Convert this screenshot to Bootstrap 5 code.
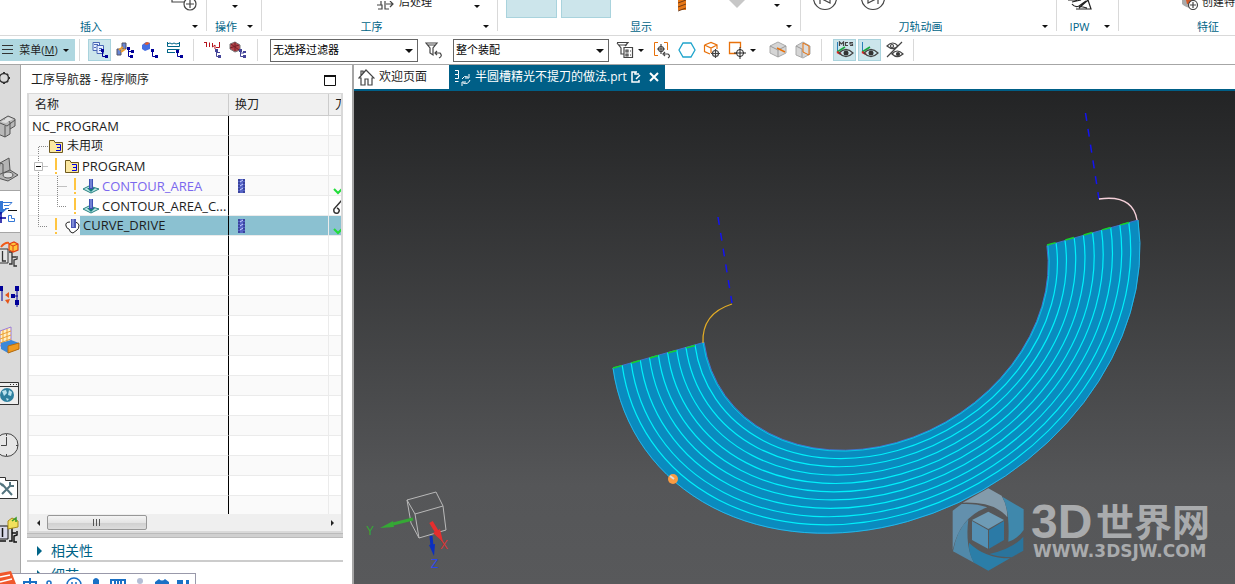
<!DOCTYPE html>
<html lang="zh-CN">
<head>
<meta charset="utf-8">
<meta name="viewport" content="width=device-width, initial-scale=1">
<title>工序导航器</title>
<link href="https://cdn.jsdelivr.net/npm/bootstrap@5.3.0/dist/css/bootstrap.min.css" rel="stylesheet">
<style>
:root { --teal:#006487; --tab:#005f87; --sel:#cce5eb; --selline:#a9d3dd; --rule:#d9d9d9; --edge:#a6a6a6; }
body { font-family:"Open Sans","Noto Sans CJK SC",sans-serif; font-size:12px; line-height:16px; color:#1e1e1e; background:#fff; }
button { border:0; background:none; padding:0; color:inherit; font:inherit; display:flex; align-items:center; justify-content:center; }
svg { display:block; flex:none; fill:none; }
.k { stroke:#444; stroke-width:1.2; }
.caret { width:10px; height:12px; flex:none; }
.caret::before { content:""; border:3px solid transparent; border-top-color:#111; border-bottom:0; }

.ribbon { display:grid; grid-template-columns:207px 55px 236px 303px 256px 62px 1fr; height:36px; border-bottom:1px solid var(--rule); overflow:hidden; }
.rgroup { position:relative; display:flex; flex-direction:column; justify-content:space-between; min-width:0; overflow:hidden; }
.rgroup:not(:last-child)::after { content:""; position:absolute; right:0; top:0; height:31px; border-right:1px solid var(--rule); }
.rtools { height:18px; display:flex; align-items:flex-start; }
.rlabel { display:flex; align-items:center; height:17px; padding-right:7px; color:var(--teal); font-size:11px; }
.rlabel > span { flex:1; text-align:center; white-space:nowrap; }
.rbig { width:51px; height:18px; background:var(--sel); border:1px solid var(--selline); border-top:0; }
.clipped { height:10px; align-items:flex-end; font-size:11px; white-space:nowrap; }

.cmdbar { height:29px; border-bottom:1px solid var(--edge); font-size:11px; }
.menubtn { background:#afd7e0; width:75px; height:22px; gap:5px; }
.vsep { width:1px; height:22px; background:var(--rule); flex:none; }
.vsep.mid { margin:0 7px; }
.tool { width:23px; height:22px; flex:none; }
.tool.on { background:var(--sel); border:1px solid var(--selline); }
.tools { display:flex; gap:2px; align-items:center; }
.pick { position:relative; height:23px; }
.pick select { appearance:none; width:100%; height:100%; border:1px solid #666; border-radius:0; background:#fff; padding:0 2px; font-size:11px; line-height:16px; color:#000; }
.pick .caret { position:absolute; right:3px; top:6px; pointer-events:none; display:flex; align-items:center; }
.pick .caret::before { border-width:4px 4px 0; }
.w-filter { width:148px; } .w-scope { width:156px; }

.rail { width:21px; background:#dadada; border-right:1px solid var(--edge); overflow:hidden; flex:none; }
.rail button { width:20px; height:43px; justify-content:flex-start; flex:none; }
.rail .short { height:25px; margin-bottom:14px; }
.rail .far { margin-top:9px; }
.rail .open { width:21px; background:#fff; border:solid var(--edge); border-width:1px 0; }
.navpane { width:333px; flex:none; padding:0 9px 0 6px; border-right:2px solid var(--edge); }
.panehead { height:28px; padding:2px 7px 0 4px; }
.treebox { border:2px solid var(--rule); border-top-width:1px; overflow:hidden; min-height:0; }
.treewrap { overflow:hidden; min-height:0; }
.tree { table-layout:fixed; width:100%; border-collapse:separate; border-spacing:0; }
.tree th { height:22px; background:#f0f0f0; border-right:1px solid #ccc; border-bottom:1px solid #ccc; font-weight:400; padding:0 0 0 6px; overflow:hidden; white-space:nowrap; }
.tree td { height:20px; padding:0; border-bottom:1px solid #ebebeb; border-right:1px solid #ebebeb; overflow:hidden; white-space:nowrap; }
.tree td:first-child { border-right:1px solid #000; }
.tree th:last-child,.tree td:last-child { border-right:0; }
.tree tbody tr:nth-child(even) td { background:#fafafa; }
.node { display:flex; align-items:center; height:19px; }
.node span { font-size:13px; padding-left:3px; }
.node .zh { font-size:12px; padding-left:4px; }
.node .later { color:#7b68ee; }
.tree tbody tr.current td:not(:first-child),.current .node span { background:#8bc1d1; }
.current .node span { flex:1; line-height:19px; }
.hbar { height:17px; background:#efefef; padding:0 4px; }
.thumb { width:100px; height:15px; border:1px solid #979797; border-radius:2px; background:linear-gradient(#f4f4f4,#e4e4e4 50%,#cfcfcf 51%,#dcdcdc); }
.splitter { height:5px; background:#d0d0d0; border:solid #bbb; border-width:1px 0; flex:none; }
.fold { height:24px; font-size:14px; color:var(--teal); border-bottom:2px solid #ccc; justify-content:flex-start; padding:3px 0 0 10px; gap:8px; width:100%; flex:none; }
.fold:last-child { height:22px; border:0; }

.tabs { height:26px; border-bottom:2px solid var(--tab); flex:none; }
.doctab { height:24px; text-decoration:none; color:#1e1e1e; white-space:nowrap; display:flex; align-items:center; gap:4px; padding:0 6px 0 4px; }
.doctab.home { width:95px; }
.doctab.cur { background:var(--tab); color:#fff; }
.scene { background:linear-gradient(#232425,#555658 80%,#58595b); min-height:0; }
.scene svg { width:100%; height:100%; }
.ime { position:absolute; left:0; bottom:0; width:196px; height:11px; background:#fff; border:solid #99a; border-width:1px 1px 0 0; overflow:hidden; }
</style>
</head>
<body class="vh-100 d-flex flex-column overflow-hidden position-relative">

<header class="ribbon flex-shrink-0">
  <div class="rgroup">
    <div class="rtools justify-content-end pe-2"><svg width="28" height="12" class="k"><path d="M1 0V2H13"/><circle cx="19" cy="4" r="6"/><path d="M19 0V8M15 4H23"/></svg></div>
    <div class="rlabel"><span class="pe-2">插入</span><button class="caret" aria-label="插入"></button></div>
  </div>
  <div class="rgroup">
    <div class="rtools justify-content-center"><button class="caret" aria-label="更多操作"></button></div>
    <div class="rlabel"><span>操作</span><button class="caret" aria-label="操作"></button></div>
  </div>
  <div class="rgroup">
    <div class="rtools justify-content-end pe-3"><button class="clipped gap-1 me-4"><svg width="18" height="9" class="k"><path d="M0 4H5V8H1M4 0V4M8 0V8H12M9 3H16M13 0L16 3L13 6"/></svg>后处理</button><button class="caret ms-3" aria-label="更多后处理"></button></div>
    <div class="rlabel"><span>工序</span><button class="caret" aria-label="工序"></button></div>
  </div>
  <div class="rgroup">
    <div class="rtools ps-2"><button class="rbig me-1" aria-label="显示刀轨"></button><button class="rbig" aria-label="显示刀具"></button>
      <svg width="190" height="14"><path d="M67 0H75V10H67Z" fill="#e67817"/><path d="M67 3L75 0M67 7L75 4M67 11L75 8" stroke="#733b15"/><path d="M118 0H134L126 8Z" fill="#c7c7c7"/><path d="M163 4H169L166 7Z" fill="#111"/></svg></div>
    <div class="rlabel"><span>显示</span><button class="caret" aria-label="显示"></button></div>
  </div>
  <div class="rgroup">
    <div class="rtools ps-2"><svg width="90" height="14" class="k"><circle cx="16" cy="-2" r="11.500"/><path d="M11 -4V4M21 -6V3L13 -1"/><circle cx="64" cy="-2" r="11.500"/><path d="M59 -6V3L67 -1M69 -4V4"/></svg></div>
    <div class="rlabel"><span>刀轨动画</span><button class="caret" aria-label="刀轨动画"></button></div>
  </div>
  <div class="rgroup">
    <div class="rtools justify-content-center pe-3"><svg width="30" height="12" stroke="#222" stroke-width="1.200"><path d="M3 0H12M7 4Q10 8 14 6L21 1M14 8L23 0L26 9H11M14 6L22 8M7 2L16 0"/></svg></div>
    <div class="rlabel"><span>IPW</span><button class="caret" aria-label="IPW"></button></div>
  </div>
  <div class="rgroup">
    <div class="rtools justify-content-end"><button class="clipped"><svg width="20" height="10"><path d="M0 0H10V8Q4 8 0 4Z" fill="#aaa"/><path d="M4 0H10V4H5Z" fill="#d55a28"/><circle cx="11" cy="5" r="4.500" fill="#fff" class="k"/><path class="k" d="M11 2V8M8 5H14"/></svg>创建特</button></div>
    <div class="rlabel justify-content-end pe-3">特征</div>
  </div>
</header>

<nav class="cmdbar d-flex align-items-center flex-shrink-0" aria-label="选择工具">
  <button class="menubtn"><svg width="12" height="12" stroke="#333"><path d="M0 1.500H11M0 5.500H11M0 9.500H11"/></svg><span>菜单(<u>M</u>)</span><i class="caret d-flex align-items-center"></i></button>
  <i class="vsep ms-1 me-2"></i>
  <div class="tools">
    <button class="tool on" aria-label="程序顺序视图"><svg width="18" height="18"><path d="M2 1.500H8.500V9.500H2Z" fill="#e8efff" stroke="#4a67b5"/><path d="M6 4.500H12.500V12.500H6Z" fill="#e8efff" stroke="#4a67b5"/><path d="M3 3.500H7M3 6.500H5M8 7.500H11M8 9.500H10" stroke="#4a67b5"/><path d="M11.500 9V15.500H16" stroke="#009"/><path d="M10 8h3v3h-3zM14 14h3v3h-3z" fill="#009"/></svg></button>
    <button class="tool" aria-label="机床视图"><svg width="18" height="18"><path d="M1 8H5V14H1ZM6 2H10V8H6Z" fill="#6786d4" stroke="#556"/><path d="M3 9L7 6M5 11L9 8" stroke="#ec9d30" stroke-width="2"/><path d="M12.500 6V15.500H16M12 10.500H16" stroke="#009"/><path d="M11 6h3v3h-3zM15 9h3v3h-3zM14 14h3v3h-3z" fill="#009"/></svg></button>
    <button class="tool" aria-label="几何视图"><svg width="18" height="18"><path d="M1 4L5 1L9 2V8L4 10L1 8Z" fill="#466fe0"/><path d="M3 3L6 1L9 2L6 4Z" fill="#e55c28"/><path d="M11.500 9V15.500H16" stroke="#009"/><path d="M10 8h3v3h-3zM14 14h3v3h-3z" fill="#009"/></svg></button>
    <button class="tool" aria-label="加工方法视图"><svg width="18" height="18"><path d="M1.500 1V5.500H13.500V1M1.500 12V8.500H13.500M1 3L4 2L6 3L8 2L10 3L14 2M1 11.500H9" stroke="#006487"/><path d="M11.500 10V15.500H16" stroke="#009"/><path d="M10 9h3v3h-3zM14 14h3v3h-3z" fill="#009"/></svg></button>
  </div>
  <i class="vsep mid"></i>
  <div class="tools">
    <button class="tool" aria-label="刀轨"><svg width="18" height="18"><path d="M0 1.500H3M2.500 1V6M5.500 6V1.500M8.500 2V6L11 4V8M12 6.500H15.500V1" stroke="#b5121b"/><path d="M12.500 8V15.500H16M12 11.500H16" stroke="#449"/><path d="M11 8h3v3h-3zM14 14h3v3h-3z" fill="#449"/></svg></button>
    <button class="tool" aria-label="工件"><svg width="18" height="18"><path d="M1 3L6 1L11 4V9L6 11L1 8Z" fill="#b34249" stroke="#777"/><path d="M2 3L10 9M6 1V10M1 7L10 4" stroke="#742026"/><path d="M11.500 8V15.500H16M11 12H15" stroke="#449"/><path d="M10 8h3v3h-3zM14 14h3v3h-3zM14 10h3v2h-3z" fill="#449"/></svg></button>
  </div>
  <i class="vsep ms-2 me-1"></i>
  <div class="pick w-filter ms-2 me-1"><select aria-label="选择过滤器"><option>无选择过滤器</option></select><i class="caret"></i></div>
  <button class="tool me-2" aria-label="重置过滤器"><svg width="18" height="18" class="k"><path d="M1 2H12L8 7V14L5 12V7ZM2 4H11M10 12H15Q18 15 14 17M12 10L10 12L12 14"/></svg></button>
  <div class="pick w-scope"><select aria-label="选择范围"><option>整个装配</option></select><i class="caret"></i></div>
  <button class="tool ms-1" aria-label="选择优先级"><svg width="18" height="18" class="k"><path d="M1 1.500H12L9 5M1 2L5 7V13H8M3 4H11M8 6.500H16.500V16.500H8ZM10 9H12V11H10ZM10 13H12V15H10ZM14 10H15M14 14H15"/></svg></button>
  <button class="caret me-1" aria-label="更多优先级"></button>
  <div class="tools">
    <button class="tool" aria-label="捕捉"><svg width="18" height="18"><path d="M5 1.500H1.500V14.500H5M11 1.500H14.500V9" stroke="#e8710a"/><circle cx="8" cy="8" r="2.500" class="k"/><path class="k" d="M8 3V13M4 8H12M11 13H15Q18 15 15 17M12 11L10 13L12 15"/></svg></button>
    <button class="tool" aria-label="多边形"><svg width="18" height="18"><path d="M5 2H13L17 9L13 16H5L1 9Z" stroke="#1fa4cc" stroke-width="1.300"/></svg></button>
    <button class="tool" aria-label="体捕捉"><svg width="18" height="18"><path d="M1.500 4L8 1.500L14 4V8M1.500 4V10.500L7 13M1.500 4L8 7L14 4M8 7V12" stroke="#e8710a" stroke-width="1.200"/><circle cx="12.500" cy="12.500" r="3" class="k"/><path class="k" d="M12.500 8V17M8 12.500H17"/></svg></button>
    <button class="tool" aria-label="面捕捉"><svg width="18" height="18"><path d="M8 12.500H1.500V1.500H12.500V7" stroke="#e8710a" stroke-width="1.300"/><circle cx="12" cy="12" r="3.500" stroke="#222"/><path stroke="#222" d="M12 6V18M6 12H18"/></svg></button>
  </div>
  <button class="caret me-2" aria-label="更多捕捉"></button>
  <div class="tools">
    <button class="tool" aria-label="剖切"><svg width="18" height="18"><path d="M1 5L9 1L17 5V12L9 16L1 12Z" fill="#d5d5d5" stroke="#aaa"/><path d="M1 5L9 9L17 5M9 9V16" stroke="#999"/><path d="M8 7L16 11" stroke="#e8710a" stroke-width="1.500"/></svg></button>
    <button class="tool" aria-label="着色"><svg width="18" height="18"><path d="M2 5L9 1L16 5V13L9 17L2 14Z" fill="#d5d5d5" stroke="#aaa"/><path d="M2 5L8 8V16" stroke="#999"/><path d="M9 2L15 5V14L9 11Z" stroke="#e8710a" fill="#ddd"/></svg></button>
  </div>
  <i class="vsep mid"></i>
  <div class="tools ps-1">
    <button class="tool on" aria-label="显示 MCS"><svg width="18" height="18"><path d="M1.500 1V12" stroke="#2a7fb8"/><path d="M1 11L9 6" stroke="#15a83c" stroke-width="1.500"/><path d="M1 11L5 13" stroke="#e22" stroke-width="2"/><path class="k" d="M3.500 5V1L5.500 3L7.500 1V5M12 1.500H9.500V4.500H12M17 1.500H14V3H16.500V4.500H14"/><path d="M3 12Q10 5 17 12Q10 19 3 12Z" class="k"/><circle cx="10" cy="12" r="2.500" fill="#333"/></svg></button>
    <button class="tool on" aria-label="显示坐标系"><svg width="18" height="18"><path d="M1.500 1V12" stroke="#2a7fb8"/><path d="M1 11L9 6" stroke="#15a83c" stroke-width="1.500"/><path d="M1 11L5 13" stroke="#e22" stroke-width="2"/><path d="M3 12Q10 5 17 12Q10 19 3 12Z" class="k"/><circle cx="10" cy="12" r="2.500" fill="#333"/></svg></button>
    <button class="tool" aria-label="显示和隐藏"><svg width="18" height="18" class="k"><path d="M1 16L16 1M1 5Q7 -1 12 5Q7 10 1 5ZM6 13Q11 7 17 13Q11 18 6 13Z"/><circle cx="6" cy="5" r="1.500"/><circle cx="12" cy="13" r="1.500" fill="#333"/></svg></button>
  </div>
  <i class="vsep mid"></i>
</nav>

<div class="d-flex flex-grow-1 overflow-hidden">
  <aside class="rail d-flex flex-column" aria-label="资源条">
    <button class="short" aria-label="设置"><svg width="20" height="20"><circle cx="4" cy="10" r="4.500" stroke="#333" stroke-width="1.500"/><path d="M4 4V6M4 14V16M8 10H10M7 7L8 6M7 13L8 14" stroke="#333" stroke-width="2"/></svg></button>
    <button aria-label="装配导航器"><svg width="20" height="28"><path d="M-2 10L8 4L15 7V14L10 17V22L5 25L-2 22Z" fill="#b8b8b8" stroke="#555"/><path d="M0 11L7 14L15 8M5 14V25M10 10V17M4 7L10 10" stroke="#555"/><path d="M1 10L8 5L13 7L6 11Z" fill="#dedede"/></svg></button>
    <button aria-label="部件导航器"><svg width="20" height="28"><path d="M0 8L9 3L10 15L18 20L8 26L-2 23Z" fill="#b4b4b4" stroke="#555"/><path d="M0 8L3 9V18L-2 20M10 15L3 18" stroke="#555"/><ellipse cx="8" cy="20" rx="5" ry="3" fill="#ddd" stroke="#555"/></svg></button>
    <button class="open" aria-label="工序导航器"><svg width="20" height="28"><path d="M0 3H3V11H7L0 17Z" fill="#3577d5"/><path d="M3 4.500H12L9 7.500H4M5 10.500H9" stroke="#3577d5"/><path d="M8 12.500H17" stroke="#111"/><path d="M0 20H6M1 14V25" stroke="#009" stroke-width="1.500"/><path d="M8.500 17.500V23.500H14.500V20.500H11.500V17.500Z" stroke="#3577d5"/></svg></button>
    <button aria-label="机床导航器"><svg width="20" height="30"><path d="M-1 9H8V23H-1Z" fill="#e4e4e4" stroke="#333"/><path d="M2.500 11V21H6M9 12H12V24H9M12 17H16M17 16V19L14 20V26H17" stroke="#333" stroke-width="1.300"/><path d="M1 7Q5 2 9 3" stroke="#f15a18" stroke-width="2"/><path d="M9 4L14 2L18 4V10L13 12L9 10Z" fill="#ffc43a" stroke="#e03f12" stroke-width="1.200"/><path d="M9 4L13 6L18 4M13 6V12" stroke="#e03f12"/></svg></button>
    <button aria-label="加工向导"><svg width="20" height="30"><path d="M0 3H3V8H0ZM15 3h4v5h-4zM11 11h4v4h-4zM15 17h4v5h-4z" fill="#009"/><path d="M17 5V24M2 6V18M11 13H18" stroke="#009"/><path d="M5 12L9 9V15ZM5 17L10 16L8 21Z" fill="#e55618"/></svg></button>
    <button aria-label="库"><svg width="20" height="30"><path d="M0 5L11 1V18L0 20Z" fill="#fff0c5" stroke="#9a7ad8"/><path d="M0 9L11 5M0 13L11 9M0 17L11 13M3 4V19M7 3V18" stroke="#ed9e32"/><path d="M1 17L11 14L19 17V23L8 27L1 23Z" fill="#3d88d8"/><path d="M8 20L19 17V23L8 27Z" fill="#ef9a1f" stroke="#b96c0c"/></svg></button>
    <button class="far" aria-label="网页浏览器"><svg width="20" height="28"><path d="M-1 3.500H18.500V25.500H-1Z" fill="#eee" stroke="#333"/><path d="M0 7.500H18M10 5.500H11M13 5.500H14M16 5.500H17" stroke="#333"/><circle cx="7" cy="16" r="7" fill="#2d7f9e"/><path d="M2 12L6 11L7 14L4 17ZM9 11L12 13L11 17L8 16ZM6 19L9 20L7 22Z" fill="#b9e2ee"/></svg></button>
    <button class="far" aria-label="历史记录"><svg width="20" height="26"><circle cx="6.500" cy="13" r="11.500" stroke="#444" fill="#e6e6e6"/><path d="M6.500 5V13.500H1M6.500 2V4M6.500 22V24M16 13.500H18" stroke="#444"/></svg></button>
    <button aria-label="工具"><svg width="20" height="26"><path d="M-1 2.500H5.500V5.500H17.500V23.500H-1Z" fill="#fff" stroke="#333"/><path d="M2 9L12 20M11 10L2 19" stroke="#54747f" stroke-width="2"/><path d="M10 7V11H14M0 8L3 11" stroke="#54747f" stroke-width="2"/></svg></button>
    <button aria-label="机床构建器"><svg width="20" height="30"><path d="M-1 10H8V23H-1Z" fill="#d9d9e8" stroke="#111"/><path d="M2.500 12V21M9 12H12V25H9M12 17H16M17 15V19L14 20V26H17M0 25H6" stroke="#111" stroke-width="1.500"/><path d="M8 5L12 2L18 5V11L8 13Z" fill="#f2e05c" stroke="#a88a1c"/><path d="M12 5L16 2V6" stroke="#3a9a2b" stroke-width="1.500"/></svg></button>
  </aside>

  <section class="navpane d-flex flex-column">
    <div class="panehead d-flex align-items-center justify-content-between flex-shrink-0"><span>工序导航器 - 程序顺序</span><button aria-label="最大化"><svg width="12" height="11" stroke="#111"><path d="M.5 1H11.500V10.500H.5Z"/><path d="M0 1H12" stroke-width="2"/></svg></button></div>
    <div class="treebox d-flex flex-column flex-grow-1">
      <div class="treewrap flex-grow-1">
      <table class="tree">
        <colgroup><col style="width:200px"><col style="width:100px"><col></colgroup>
        <thead><tr><th>名称</th><th>换刀</th><th>刀轨</th></tr></thead>
        <tbody>
          <tr><td><div class="node"><span>NC_PROGRAM</span></div></td><td></td><td></td></tr>
          <tr><td><div class="node"><svg width="20" height="20"><path d="M9.500 20V10.500H19" stroke="#888" stroke-dasharray="1 1"/></svg><svg width="14" height="14"><path d="M.5 1.500H5L6 3.500H13.500V13.500H.5Z" fill="#fbe7a0" stroke="#6f5a1e"/><path d="M7 5.500H11.500V11.500H7M8 8.500H12" stroke="#00d"/></svg><span class="zh">未用项</span></div></td><td></td><td></td></tr>
          <tr><td><div class="node"><svg width="36" height="20"><path d="M9.500 0V20M9.500 10.500H19" stroke="#888" stroke-dasharray="1 1"/><path d="M5.500 6.500H13.500V14.500H5.500Z" fill="#fff" stroke="#bbb"/><path d="M7 10.500H12" stroke="#111"/><path d="M27 2V14M27 16V18" stroke="#ffc540" stroke-width="2"/></svg><svg width="14" height="14"><path d="M.5 1.500H5L6 3.500H13.500V13.500H.5Z" fill="#fbe7a0" stroke="#6f5a1e"/><path d="M7 5.500H11.500V11.500H7M8 8.500H12" stroke="#00d"/></svg><span>PROGRAM</span></div></td><td></td><td></td></tr>
          <tr><td><div class="node"><svg width="54" height="20"><path d="M9.500 0V20M28.500 0V20M28.500 10.500H38" stroke="#888" stroke-dasharray="1 1"/><path d="M46 2V14M46 16V18" stroke="#ffc540" stroke-width="2"/></svg><svg width="16" height="16"><path d="M0 11L6 8L16 11L8 15Z" fill="#b8e5e5" stroke="#268080"/><path d="M4 10L8 14L12 10Z" fill="#177c7c"/><path d="M6 1H10V11H6Z" fill="#3d4fb5"/><path d="M8 1V10" stroke="#a7b7f2"/></svg><span class="later">CONTOUR_AREA</span></div></td><td><svg class="ms-2" width="9" height="16"><path d="M1 1H8V15H1Z" fill="#5563c5"/><path d="M2 1V15M7 1V15" stroke="#222774" stroke-dasharray="2 1"/><path d="M3 4L6 2M3 8L6 6M3 12L6 10" stroke="#cbd3ff"/></svg></td><td><svg width="12" height="18"><path d="M5 12L9 16L14 11" stroke="#22dd3a" stroke-width="2"/></svg></td></tr>
          <tr><td><div class="node"><svg width="54" height="20"><path d="M9.500 0V20M28.500 0V10.500H38" stroke="#888" stroke-dasharray="1 1"/><path d="M46 2V14M46 16V18" stroke="#ffc540" stroke-width="2"/></svg><svg width="16" height="16"><path d="M0 11L6 8L16 11L8 15Z" fill="#b8e5e5" stroke="#268080"/><path d="M4 10L8 14L12 10Z" fill="#177c7c"/><path d="M6 1H10V11H6Z" fill="#3d4fb5"/><path d="M8 1V10" stroke="#a7b7f2"/></svg><span>CONTOUR_AREA_C...</span></div></td><td></td><td><svg width="12" height="18"><path d="M13 3L5 12Q4 17 9 16Q12 13 8 11" stroke="#333" stroke-width="1.500"/></svg></td></tr>
          <tr class="current"><td><div class="node"><svg width="36" height="20"><path d="M9.500 0V10.500H19" stroke="#888" stroke-dasharray="1 1"/><path d="M27 2V14M27 16V18" stroke="#ffc540" stroke-width="2"/></svg><svg width="15" height="16"><path d="M5 4Q0 4 1 8Q2 11 4 11Q5 15 8 15L12 12Q14 11 14 7Q13 4 9 4" fill="#fff" stroke="#222"/><path d="M6 1H11V10H6Z" fill="#4c58b5"/><path d="M8 1V9" stroke="#b4bff5"/></svg><span>CURVE_DRIVE</span></div></td><td><svg class="ms-2" width="9" height="16"><path d="M1 1H8V15H1Z" fill="#5563c5"/><path d="M2 1V15M7 1V15" stroke="#222774" stroke-dasharray="2 1"/><path d="M3 4L6 2M3 8L6 6M3 12L6 10" stroke="#cbd3ff"/></svg></td><td><svg width="12" height="18"><path d="M5 12L9 16L14 11" stroke="#22dd3a" stroke-width="2"/></svg></td></tr>
          <tr><td></td><td></td><td></td></tr><tr><td></td><td></td><td></td></tr>
          <tr><td></td><td></td><td></td></tr><tr><td></td><td></td><td></td></tr>
          <tr><td></td><td></td><td></td></tr><tr><td></td><td></td><td></td></tr>
          <tr><td></td><td></td><td></td></tr><tr><td></td><td></td><td></td></tr>
          <tr><td></td><td></td><td></td></tr><tr><td></td><td></td><td></td></tr>
          <tr><td></td><td></td><td></td></tr><tr><td></td><td></td><td></td></tr>
          <tr><td></td><td></td><td></td></tr><tr><td></td><td></td><td></td></tr>
        </tbody>
      </table>
      </div>
      <div class="hbar d-flex align-items-center flex-shrink-0">
        <button aria-label="向左"><svg width="14" height="10"><path d="M7 2V8L4 5Z" fill="#222"/></svg></button>
        <div class="thumb d-flex align-items-center justify-content-center"><svg width="9" height="7" stroke="#555"><path d="M.5 0V7M3.500 0V7M6.500 0V7"/></svg></div>
        <button class="ms-auto" aria-label="向右"><svg width="8" height="10"><path d="M2 2V8L5 5Z" fill="#222"/></svg></button>
      </div>
    </div>
    <div class="splitter"></div>
    <button class="fold"><svg width="6" height="10"><path d="M0 0V10L5 5Z" fill="#006487"/></svg>相关性</button>
    <button class="fold"><svg width="6" height="10"><path d="M0 0V10L5 5Z" fill="#006487"/></svg>细节</button>
  </section>

  <main class="flex-grow-1 d-flex flex-column overflow-hidden">
    <div class="tabs d-flex">
      <a class="doctab home" href="#"><svg width="17" height="17" class="k"><path d="M1 9L8 1L16 9H14V16H10V10H7V16H3V9ZM3 6V2H5V4"/></svg>欢迎页面</a>
      <a class="doctab cur" href="#"><svg width="18" height="18" stroke="#fff"><path d="M2 2.500H5.500V6.500H2M5.500 6.500V10.500H2M2 13.500H5.500M9 11Q11 7 15 9M16 6V10H12M17 12Q15 17 10 15M9 18V14H13"/></svg>半圆槽精光不提刀的做法.prt<svg width="10" height="12" stroke="#fff" stroke-width="1.500"><path d="M6 1H1V11H8V9M4 1V3H8M5 8L9 4"/></svg><svg class="ms-1" width="10" height="10" stroke="#fff" stroke-width="2"><path d="M1 1L9 9M9 1L1 9"/></svg></a>
    </div>
    <div class="scene flex-grow-1">
      <svg viewBox="354 91 881 493" role="img" aria-label="刀轨">
        <!-- site mark -->
        <g transform="translate(930 480) scale(.3333)">
          <path d="M175 25L215 47Q232 75 232 112Q195 65 98 68Z" fill="#839bab"/>
          <path d="M68 92L95 72Q140 70 172 82Q90 110 68 210Z" fill="#6390ad"/>
          <path d="M69 214Q80 150 115 118Q105 200 132 248Z" fill="#5189a9"/>
          <path d="M117 188Q165 235 240 235L175 272L132 248Q115 220 117 188Z" fill="#2b7ea8"/>
          <path d="M280 170V212L245 232Q210 232 178 222Q250 205 280 170Z" fill="#2a749c"/>
          <path d="M217 50L281 88V150Q265 175 235 185Q240 90 217 50Z" fill="#3f88ac"/>
          <path d="M126 120L175 95L222 120L175 147Z" fill="#6e9bb5"/>
          <path d="M126 123L174 150V206L126 180Z" fill="#5490b4"/>
          <path d="M222 123L177 150V206L222 180Z" fill="#2b7aa6"/>
        </g>
        <g fill="#a9abad">
          <text x="1031" y="538" font-family="Liberation Sans, sans-serif" font-size="48" font-weight="700">3D</text>
          <text x="1096" y="536" font-family="Noto Sans CJK SC, sans-serif" font-size="38" font-weight="700">世界网</text>
          <text x="1033" y="557" font-family="DejaVu Sans, sans-serif" font-size="17" font-weight="700">WWW.3DSJW.COM</text>
        </g>
        <!-- half ring: unit circles mapped on to the view plane -->
        <g transform="matrix(262.500 -74 32 227.500 875.500 294)">
          <path d="M1 0A1 1 0 0 1 -1 0H-.653A.653 .653 0 0 0 .653 0Z" fill="#0a8bbf"/>
          <path vector-effect="non-scaling-stroke" stroke="#4272cf" d="M1 0A1 1 0 0 1 -1 0H-.653A.653 .653 0 0 0 .653 0Z"/>
          <g stroke="#00f0fa" stroke-width="1.200">
            <path vector-effect="non-scaling-stroke" d="M.965 0A.965 .965 0 0 1 -.965 0M.931 0A.931 .931 0 0 1 -.931 0M.896 0A.896 .896 0 0 1 -.896 0M.861 0A.861 .861 0 0 1 -.861 0M.827 0A.827 .827 0 0 1 -.827 0M.792 0A.792 .792 0 0 1 -.792 0M.757 0A.757 .757 0 0 1 -.757 0M.722 0A.722 .722 0 0 1 -.722 0M.688 0A.688 .688 0 0 1 -.688 0"/>
            <path vector-effect="non-scaling-stroke" stroke-width=".6" d="M1 0A1 1 0 0 1 -1 0M.657 0A.657 .657 0 0 1 -.657 0"/>
          </g>
        </g>
        <path d="M613 368L704 343M1047 245L1138 220" stroke="#13d42a" stroke-width="1.500" stroke-dasharray="9 10"/>
        <path d="M718 217L732 303M1085.500 113L1099 199" stroke="#1414f0" stroke-width="1.500" stroke-dasharray="8 8"/>
        <path d="M732 304C713 310 702 323 703 343" stroke="#e3ac25" stroke-width="1.300"/>
        <path d="M1099 199C1120 196 1134 202 1137 220" stroke="#f3cfd8" stroke-width="1.300"/>
        <circle cx="673" cy="479" r="5" fill="#fa9c42"/><path d="M670 476L674 479" stroke="#ddd" stroke-width="2"/>
        <!-- view triad -->
        <path d="M415 514L443 506L446 530L419 538ZM407 500L436 492L443 506M407 500L415 514M407 500L411 523L419 538" stroke="#b9b9b9"/>
        <path d="M413 519L393 524" stroke="#35a835" stroke-width="3"/><path d="M380 528L393 521L394 527Z" fill="#35a835"/>
        <path d="M431 522L437 532" stroke="#e52e2e" stroke-width="4"/><path d="M443 542L433 533L440 529Z" fill="#e52e2e"/>
        <path d="M431 536L432 546" stroke="#0b2fc0" stroke-width="3"/><path d="M434 556L429 545L435 544Z" fill="#0b2fc0"/>
        <g font-family="Liberation Sans, sans-serif" font-size="12"><text x="366" y="535" fill="#35a835">Y</text><text x="440" y="549" fill="#d93636">X</text><text x="431" y="568" fill="#2c48ee">Z</text></g>
      </svg>
    </div>
  </main>
</div>

<div class="ime" aria-label="输入法"><svg width="195" height="11"><path d="M24 11V8H36V11M30 4V11" stroke="#1a70c5" stroke-width="2"/><circle cx="49" cy="9" r="2" stroke="#1a70c5" stroke-width="1.500"/><circle cx="74" cy="11" r="7" stroke="#1a70c5" stroke-width="1.500"/><path d="M72 8V10M76 8V10" stroke="#1a70c5" stroke-width="1.500"/><path d="M93 10V6Q96 2 99 6V10Z" fill="#1a70c5"/><path d="M111 11V6H125V11M115 6V11M118 6V11M121 6V11" stroke="#1a70c5" stroke-width="2"/><circle cx="140" cy="7" r="3" fill="#b4bdd5"/><path d="M155 8L159 5Q162 8 165 5L169 8V11H155Z" fill="#1a70c5"/><path d="M177 6H183V11H177ZM186 6H189V11H186Z" fill="#1a70c5"/></svg></div>
<svg class="position-absolute bottom-0 start-0" width="16" height="13" aria-hidden="true"><path d="M0 2L11 0L16 13H0Z" fill="#f0582c"/><path d="M0 6L10 4M0 11L12 8" stroke="#fff" stroke-width="1.500"/></svg>

<script src="https://cdn.jsdelivr.net/npm/bootstrap@5.3.0/dist/js/bootstrap.bundle.min.js"></script>
</body>
</html>
